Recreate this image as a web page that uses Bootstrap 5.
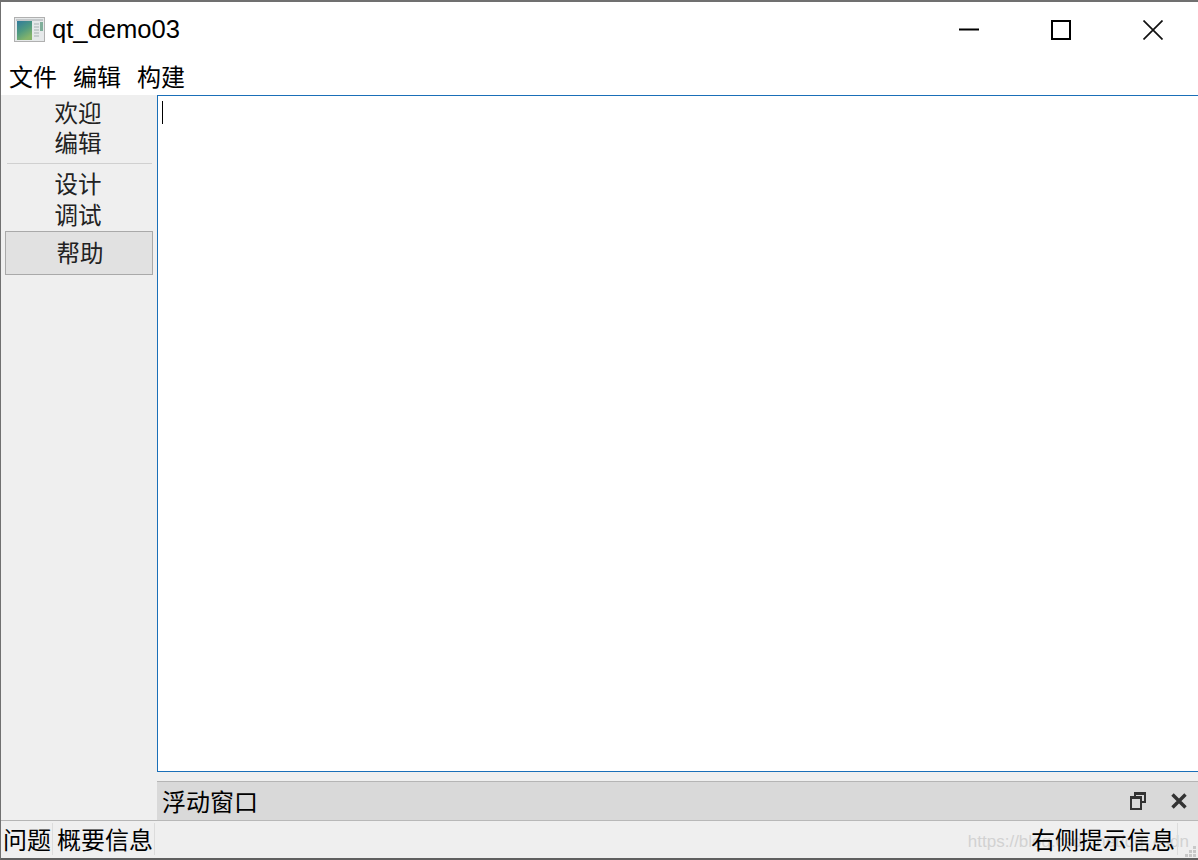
<!DOCTYPE html>
<html lang="zh">
<head>
<meta charset="utf-8">
<title>qt_demo03</title>
<link rel="stylesheet" href="https://cdn.jsdelivr.net/npm/bootstrap@5.3.0/dist/css/bootstrap.min.css">
<style>
html,body{height:100%;margin:0;overflow:hidden;background:#fff}
body{font-family:"Liberation Sans","Noto Sans CJK SC",sans-serif;color:#000}
.qt-win{width:1198px;height:860px;border-top:2px solid #707070;border-left:1px solid #707070;border-bottom:2px solid #5f5f5f}
.qt-title{height:60px;font-size:25.6px;padding-left:13px;padding-bottom:4px;flex:none}
.qt-title span{margin-left:6px;line-height:1}
.qt-ctrl{width:92px;height:56px}
.qt-ctrl-wrap{margin-right:-1px}
.qt-menu{height:33px;font-size:24px;padding-left:8px;gap:16px;line-height:28px;font-family:"Noto Sans CJK SC",sans-serif;flex:none}
.qt-side{width:156px;background:#efefef;font-family:"Noto Sans CJK SC",sans-serif;font-size:23.5px;line-height:26px;color:#222;flex:none;border-bottom:1px solid #b5b5b5}
.qt-tab{height:30px;text-align:center;padding-right:2px}
.qt-tab-low{height:31px;padding-top:1px}
.qt-sep{height:1px;background:#d0d0d0;margin:4px 5px 6px 6px}
.qt-tab-on{height:44px;line-height:41px;margin:0 4px 0 4px;background:#e1e1e1;border:1px solid #a9a9a9;text-align:center;padding-left:2px}
.qt-right{background:#efefef}
.qt-edit{background:#fff;border:1px solid #1a6fb8;border-right:0;padding:5px 4px}
.qt-caret{width:1px;height:23px;background:#000}
.qt-dock{height:40px;margin-top:9px;background:#d9d9d9;border-top:1px solid #b5b5b5;border-bottom:1px solid #b8b8b8;font-family:"Noto Sans CJK SC",sans-serif;font-size:24px;padding:0 11px 0 5px}
.qt-status{height:37px;background:#efefef;font-family:"Noto Sans CJK SC",sans-serif;font-size:24px;flex:none}
.qt-cell{height:32px;line-height:32px;padding:0 1px 0 2px;border-right:1px solid #dcdcdc;margin-top:2px}
.qt-cell+.qt-cell{padding-left:4px}
.qt-wm{position:absolute;right:9px;top:8px;font-size:17px;line-height:22px;color:#d2d2d2;font-family:"Liberation Sans",sans-serif;white-space:nowrap}
.qt-rt{position:relative;padding-right:23px;margin-top:2px;line-height:32px}
.qt-rt b{font-weight:400;position:relative}
.qt-rt-div{position:absolute;right:20px;top:0;width:1px;height:32px;background:#dcdcdc}
.qt-grip{position:absolute;right:1px;bottom:1px}
</style>
</head>
<body>
<div class="qt-win d-flex flex-column">
  <div class="qt-title d-flex align-items-center">
    <svg width="32" height="26" viewBox="0 0 32 26" aria-hidden="true">
      <defs><linearGradient id="g" x1="0" y1="0" x2=".5" y2="1"><stop offset="0" stop-color="#2f7a9c"/><stop offset=".55" stop-color="#4f9a80"/><stop offset="1" stop-color="#86b56a"/></linearGradient></defs>
      <rect x=".5" y=".5" width="30" height="24" fill="#e6e9ea" stroke="#b0b0b0"/>
      <rect x="2" y="2" width="27" height="2" fill="#c4c8ca"/>
      <rect x="3" y="4" width="15" height="19" fill="url(#g)"/>
      <path d="M20 7h5M20 10h5M20 13h5M20 16h5M20 19h5" stroke="#bcc4c4" stroke-width="1.5"/>
      <path d="M26 5h3v9h-3z" fill="#7fae9a"/>
    </svg>
    <span>qt_demo03</span>
    <div class="ms-auto d-flex qt-ctrl-wrap">
      <div class="qt-ctrl d-flex align-items-center justify-content-center"><svg width="20" height="20" viewBox="0 0 20 20" aria-hidden="true"><path d="M0 9.5h20" stroke="#000" stroke-width="2"/></svg></div>
      <div class="qt-ctrl d-flex align-items-center justify-content-center"><svg width="20" height="20" viewBox="0 0 20 20" aria-hidden="true"><rect x="1" y="1" width="18" height="18" fill="none" stroke="#000" stroke-width="2"/></svg></div>
      <div class="qt-ctrl d-flex align-items-center justify-content-center"><svg width="20" height="20" viewBox="0 0 20 20" aria-hidden="true"><path d="M.5.5l19 19M19.5.5l-19 19" stroke="#111" stroke-width="1.7"/></svg></div>
    </div>
  </div>
  <div class="qt-menu d-flex"><span>文件</span><span>编辑</span><span>构建</span></div>
  <div class="d-flex flex-grow-1" style="min-height:0">
    <div class="qt-side d-flex flex-column">
      <div class="qt-tab mt-1">欢迎</div>
      <div class="qt-tab">编辑</div>
      <div class="qt-sep"></div>
      <div class="qt-tab">设计</div>
      <div class="qt-tab qt-tab-low">调试</div>
      <div class="qt-tab-on">帮助</div>
    </div>
    <div class="qt-right d-flex flex-column flex-grow-1">
      <div class="qt-edit flex-grow-1"><div class="qt-caret"></div></div>
      <div class="qt-dock d-flex align-items-center">
        <span>浮动窗口</span>
        <svg class="ms-auto" width="16" height="18" viewBox="0 0 16 18" aria-hidden="true"><path d="M4 0h12v11h-4V9h2V3H6v1H4z" fill="#333"/><path fill-rule="evenodd" d="M0 4h12v14H0zM2 7v9h8V7z" fill="#333"/></svg>
        <svg style="margin-left:25px" width="16" height="16" viewBox="0 0 16 16" aria-hidden="true"><path d="M1.5 1.5l13 13M14.5 1.5l-13 13" stroke="#333" stroke-width="3.4"/></svg>
      </div>
    </div>
  </div>
  <div class="qt-status d-flex">
    <div class="qt-cell">问题</div>
    <div class="qt-cell">概要信息</div>
    <div class="qt-rt ms-auto flex-grow-1 d-flex justify-content-end">
      <span class="qt-wm">https://blog.csdn.net/qq_csdn</span>
      <b>右侧提示信息</b>
      <i class="qt-rt-div"></i>
      <svg class="qt-grip" width="12" height="12" viewBox="0 0 12 12" aria-hidden="true"><path d="M8 1h3v3H8zM4 5h3v3H4zM8 5h3v3H8zM0 9h3v3H0zM4 9h3v3H4zM8 9h3v3H8z" fill="#c8c8c8"/></svg>
    </div>
  </div>
</div>
</body>
</html>
